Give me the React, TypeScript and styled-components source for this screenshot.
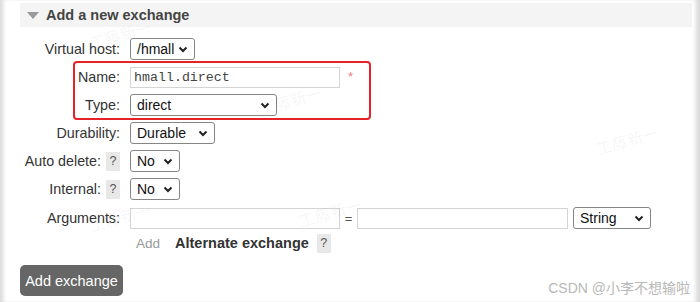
import React from "react";
import styled, { createGlobalStyle } from "styled-components";

const GlobalStyle = createGlobalStyle`
  html, body {
    margin: 0;
    padding: 0;
    background: #fff;
    overflow: hidden;
  }
  body {
    font-family: "Liberation Sans", Arial, sans-serif;
    color: #333;
  }
`;

interface FieldProps {
  label: string;
  help?: boolean;
  children: React.ReactNode;
}

const Field: React.FC<FieldProps> = ({ label, help, children }) => (
  <Row>
    <Label>
      {label}
      {help && <Help>?</Help>}
    </Label>
    <Control>{children}</Control>
  </Row>
);

const Select: React.FC<{ width: number; value: string }> = ({ width, value }) => (
  <SelectBox $width={width}>
    <span>{value}</span>
    <svg width="10" height="7" viewBox="0 0 10 7">
      <path d="M1.5 1.5 L5 5 L8.5 1.5" fill="none" stroke="#222" strokeWidth="2" />
    </svg>
  </SelectBox>
);

const marks = [
  { x: 88, y: 22 },
  { x: 258, y: 88 },
  { x: 88, y: 205 },
  { x: 298, y: 200 },
  { x: 595, y: 128 },
];

const App: React.FC = () => {
  return (
    <>
      <GlobalStyle />
      <Frame>
        <Header>
          <Triangle />
          <Title>Add a new exchange</Title>
        </Header>

        <Form>
          <Field label="Virtual host:">
            <Select width={65} value="/hmall" />
          </Field>

          <Highlight>
            <Field label="Name:">
              <Input $width={210} $mono defaultValue="hmall.direct" />
              <Required>*</Required>
            </Field>
            <Field label="Type:">
              <Select width={147} value="direct" />
            </Field>
          </Highlight>

          <Field label="Durability:">
            <Select width={85} value="Durable" />
          </Field>
          <Field label="Auto delete:" help>
            <Select width={50} value="No" />
          </Field>
          <Field label="Internal:" help>
            <Select width={50} value="No" />
          </Field>
          <ArgsRow>
            <Label>Arguments:</Label>
            <Control>
              <Input $width={210} />
              <Equals>=</Equals>
              <Input $width={211} />
              <Spacer />
              <Select width={78} value="String" />
            </Control>
          </ArgsRow>
          <AddRow>
            <AddLink>Add</AddLink>
            <Alternate>Alternate exchange</Alternate>
            <Help>?</Help>
          </AddRow>
        </Form>

        <SubmitButton type="button">Add exchange</SubmitButton>

        {marks.map((m, i) => (
          <Watermark key={i} style={{ left: m.x, top: m.y }}>
            工藤新一
          </Watermark>
        ))}
        <Credit>CSDN @小李不想输啦</Credit>
      </Frame>
    </>
  );
};

const Frame = styled.div`
  position: relative;
  height: 302px;
  padding: 3px 8px 0 20px;
  box-sizing: border-box;
  background: #fff;
  box-shadow: inset 5px 0 4px -2px #d8d8d8, inset -7px 0 4px -3px #d8d8d8;
  overflow: hidden;
`;

const Header = styled.div`
  display: flex;
  align-items: center;
  height: 24px;
  background: #f4f4f4;
  padding-left: 7px;
`;

const Triangle = styled.div`
  width: 0;
  height: 0;
  border-left: 6px solid transparent;
  border-right: 6px solid transparent;
  border-top: 7px solid #999;
  margin-right: 7px;
`;

const Title = styled.h2`
  margin: 0;
  font-size: 14.5px;
  font-weight: bold;
  color: #444;
`;

const Form = styled.div`
  display: flex;
  flex-direction: column;
  margin-top: 8px;
`;

const Row = styled.div`
  display: flex;
  align-items: center;
  height: 28px;
`;

const ArgsRow = styled(Row)`
  height: 30px;
`;

const Label = styled.label`
  width: 100px;
  display: flex;
  justify-content: flex-end;
  align-items: center;
  gap: 5px;
  font-size: 14.3px;
  color: #333;
  white-space: nowrap;
`;

const Control = styled.div`
  display: flex;
  align-items: center;
  margin-left: 10px;
`;

const Help = styled.span`
  display: inline-flex;
  align-items: center;
  justify-content: center;
  flex-shrink: 0;
  width: 14px;
  height: 19px;
  background: #e8e8e8;
  color: #555;
  font-size: 12.5px;
  font-weight: normal;
`;

const SelectBox = styled.div<{ $width: number }>`
  width: ${(p) => p.$width}px;
  height: 22px;
  box-sizing: border-box;
  border: 1px solid #858585;
  border-radius: 3px;
  background: #fff;
  display: flex;
  align-items: center;
  justify-content: space-between;
  padding: 0 6px 0 6px;
  font-size: 14px;
  color: #111;
  white-space: nowrap;
`;

const Input = styled.input<{ $width: number; $mono?: boolean }>`
  width: ${(p) => p.$width}px;
  height: 21px;
  box-sizing: border-box;
  border: 1px solid #d4d4d4;
  padding: 0 3px;
  font-family: ${(p) =>
    p.$mono ? `"Liberation Mono", "Courier New", monospace` : `"Liberation Sans", Arial, sans-serif`};
  font-size: 13.3px;
  color: #444;
  outline: none;
`;

const Required = styled.span`
  color: #f08080;
  font-size: 13px;
  margin-left: 8px;
  align-self: flex-start;
  margin-top: 2px;
`;

const Highlight = styled.div`
  position: relative;
  &::before {
    content: "";
    position: absolute;
    left: 53px;
    top: -2px;
    width: 298px;
    height: 59px;
    box-sizing: border-box;
    border: 2px solid #e52228;
    border-radius: 4px;
    pointer-events: none;
  }
`;

const Equals = styled.span`
  width: 17px;
  text-align: center;
  font-size: 13px;
  color: #555;
`;

const Spacer = styled.span`
  width: 5px;
`;

const AddRow = styled.div`
  display: flex;
  align-items: center;
  gap: 8px;
  height: 20px;
  padding-left: 116px;
`;

const AddLink = styled.span`
  color: #999;
  font-size: 13.5px;
  margin-right: 7px;
`;

const Alternate = styled.span`
  font-weight: bold;
  font-size: 14.5px;
  color: #333;
`;

const SubmitButton = styled.button`
  margin-top: 12px;
  width: 103px;
  height: 31px;
  background: #666;
  color: #fff;
  border: none;
  border-radius: 5px;
  font-family: "Liberation Sans", Arial, sans-serif;
  font-size: 14.5px;
  padding: 0;
  cursor: pointer;
`;

const Watermark = styled.span`
  position: absolute;
  font-family: "Noto Sans CJK SC", sans-serif;
  font-size: 16px;
  color: rgba(0, 0, 0, 0.05);
  transform: rotate(-16deg);
  pointer-events: none;
`;

const Credit = styled.span`
  position: absolute;
  right: 10px;
  bottom: 5px;
  font-family: "Liberation Sans", "Noto Sans CJK SC", sans-serif;
  font-size: 14px;
  color: #b8b8b8;
`;

export default App;
